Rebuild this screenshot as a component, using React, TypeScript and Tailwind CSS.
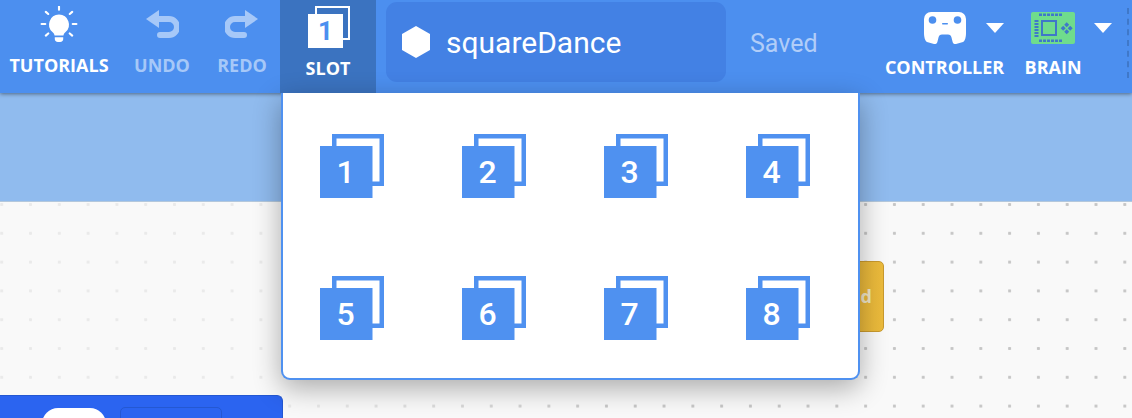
const sans = "font-['Open_Sans','Noto_Sans',sans-serif]";
const roboto = "font-['Roboto',sans-serif]";

function Bulb() {
  return (
    <svg width="38" height="37" viewBox="0 1 36 35" fill="white">
      <path d="M18 9a9.500 9.500 0 0 0-6 16.800c1.100 1 1.600 2 1.800 3.200h8.400c.2-1.200.7-2.200 1.800-3.200A9.500 9.500 0 0 0 18 9z" />
      <path d="M14 30.500h8v1.500a3 3 0 0 1-3 3h-2a3 3 0 0 1-3-3z" />
      <g stroke="white" strokeWidth="2" strokeLinecap="round">
        <path d="M18 1.500v3M5.500 6.500l2.300 2M30.500 6.500l-2.300 2M1.500 18h3.500M31 18h3.500M5.500 29l2.300-2M30.500 29l-2.300-2" />
      </g>
    </svg>
  );
}

function Undo({ flip }: { flip?: boolean }) {
  return (
    <svg width="34" height="30" viewBox="0 0 34 30" className={flip ? "-scale-x-100" : ""}>
      <path d="M1 10 L14 1 V19 Z" fill="#a6c8f8" />
      <path d="M12 10 H24 a8 8 0 0 1 0 16 H15" fill="none" stroke="#a6c8f8" strokeWidth="6" strokeLinecap="round" />
    </svg>
  );
}

function Controller() {
  return (
    <svg width="42" height="32" viewBox="0 0 42 32">
      <path
        d="M7 0H35a7 7 0 0 1 7 7V21c0 4-1 8-3 9l-7 2c-2 .3-3-.5-3.500-2.500l-1-4c-.5-2-1.500-3-3.500-3h-6c-2 0-3 1-3.500 3l-1 4C13 31.500 12 32.300 10 32l-7-2c-2-1-3-5-3-9V7a7 7 0 0 1 7-7z"
        fill="white"
      />
      <circle cx="8.500" cy="8" r="3.800" fill="#4c8fef" />
      <circle cx="33.500" cy="8" r="3.800" fill="#4c8fef" />
      <rect x="18" y="11" width="6" height="1.500" rx="0.700" fill="#4c8fef" />
    </svg>
  );
}

function Brain() {
  const top = [8, 12, 16, 20, 24, 28];
  const side = [8, 11, 14, 17, 20, 23];
  return (
    <svg width="44" height="32" viewBox="0 0 44 32">
      <rect width="44" height="32" rx="2" fill="#6fdc8c" />
      <g fill="#3f78c9">
        {top.map((x) => (
          <g key={x}>
            <rect x={x} y="1.500" width="3" height="2.500" />
            <rect x={x} y="27.500" width="3" height="2.500" />
          </g>
        ))}
        {side.map((y) => (
          <rect key={y} x="3.500" y={y} width="4" height="2" />
        ))}
        <path d="M10 8H26V24H10ZM12 10V22H24V10Z" fillRule="evenodd" />
        <rect x="34" y="11" width="3.500" height="3.500" transform="rotate(45 35.700 12.700)" />
        <rect x="34" y="18" width="3.500" height="3.500" transform="rotate(45 35.700 19.700)" />
        <rect x="30.500" y="14.500" width="3.500" height="3.500" transform="rotate(45 32.200 16.200)" />
        <rect x="37.500" y="14.500" width="3.500" height="3.500" transform="rotate(45 39.200 16.200)" />
      </g>
    </svg>
  );
}

function Caret() {
  return (
    <svg width="18" height="10" viewBox="0 0 18 10" fill="white">
      <path d="M0 0H18L9 10Z" />
    </svg>
  );
}

function SlotIcon({ n }: { n: number }) {
  return (
    <div className="relative w-16 h-16">
      <svg width="64" height="64" viewBox="0 0 64 64" className="absolute inset-0">
        <path d="M12 0H64V52H52V12H12Z" fill="#4f91f0" />
        <path d="M16.500 4.500H59.500V47.500H52V12H16.500Z" fill="white" />
        <rect x="0" y="12" width="52.500" height="52" fill="#4f91f0" />
      </svg>
      <span className={`absolute left-0 top-3 w-[51px] h-[52px] flex items-center justify-center text-[32px] font-medium text-white ${roboto}`}>
        {n}
      </span>
    </div>
  );
}

function HeaderLabel({ children, dim }: { children: string; dim?: boolean }) {
  return (
    <span className={`block text-[18px] leading-[22px] font-bold whitespace-nowrap ${sans} ${dim ? "text-[#a6c8f8]" : "text-white"}`}>
      {children}
    </span>
  );
}

export default function App() {
  return (
    <div className="relative w-[1132px] h-[418px] overflow-hidden flex flex-col bg-[#f9f9f9]">
      <header className="h-[93px] shrink-0 flex bg-[#4c8fef] shadow-[0_1px_4px_rgba(0,0,0,0.45)] z-10">
        <div className="w-[118px] flex flex-col items-center pt-[6px]">
          <Bulb />
          <div className="mt-[11px]">
            <HeaderLabel>TUTORIALS</HeaderLabel>
          </div>
        </div>
        <div className="w-[81px] pl-[7px] flex flex-col items-center pt-[9px]">
          <Undo />
          <div className="mt-[15px]">
            <HeaderLabel dim>UNDO</HeaderLabel>
          </div>
        </div>
        <div className="w-[81px] pl-[5px] flex flex-col items-center pt-[9px]">
          <Undo flip />
          <div className="mt-[15px]">
            <HeaderLabel dim>REDO</HeaderLabel>
          </div>
        </div>
        <div className="w-[96px] bg-[#3b73c0] flex flex-col items-center pt-[6px]">
          <div className="relative w-[42px] h-[42px] ml-[2px]">
            <div className="absolute right-0 top-0 w-[35px] h-[34px] border-[2.500px] border-white" />
            <div className={`absolute left-0 bottom-0 w-[35px] h-[34px] bg-white flex items-center justify-center text-[26px] font-bold text-[#4c8fef] ${roboto}`}>
              1
            </div>
          </div>
          <div className="mt-[9px]">
            <HeaderLabel>SLOT</HeaderLabel>
          </div>
        </div>
        <div className="ml-[10px] mt-[2px] w-[340px] h-[80px] rounded-[11px] bg-[#4381e4] flex items-center pl-4">
          <svg width="28" height="32" viewBox="0 0 28 32" fill="white">
            <path d="M14 0L28 8V24L14 32L0 24V8Z" />
          </svg>
          <span className={`ml-[16px] text-[30px] text-white ${roboto}`}>squareDance</span>
        </div>
        <span className={`ml-[24px] mt-[28px] h-[32px] text-[25px] leading-[32px] text-[#b1cdf8] ${roboto}`}>Saved</span>
        <div className="ml-[68px] w-[118px] flex flex-col items-center pt-[12px] relative">
          <Controller />
          <div className="mt-[12px]">
            <HeaderLabel>CONTROLLER</HeaderLabel>
          </div>
          <div className="absolute left-[100px] top-[23px]">
            <Caret />
          </div>
        </div>
        <div className="ml-[21px] w-[57px] flex flex-col items-center pt-[12px] relative">
          <Brain />
          <div className="mt-[12px]">
            <HeaderLabel>BRAIN</HeaderLabel>
          </div>
          <div className="absolute left-[69px] top-[23px]">
            <Caret />
          </div>
        </div>
        <div className="ml-[45px] mt-[8px] h-[70px] w-0 border-r-2 border-dashed border-[#3f78c9]" />
      </header>

      <div className="h-[109px] shrink-0 bg-[#90bbee] border-b border-[#b4c8dc]" />

      <main className="relative flex-1 flex flex-col justify-end bg-[#f9f9f9] bg-[linear-gradient(to_right,rgba(249,249,249,0.7)_0,rgba(249,249,249,0.7)_300px,transparent_620px),radial-gradient(circle,#c6c6c6_1.300px,transparent_1.900px)] bg-[size:100%_100%,28.800px_28.800px] bg-[position:0_0,-12.700px_-11.900px]">
        <div className="absolute left-[700px] top-[59px] w-[184px] h-[71px] rounded-[5px] border border-[#c99a2e] bg-gradient-to-r from-[#dca72f] to-[#ecbb3c] flex items-center justify-end pr-[11px]">
          <span className={`text-[18px] font-bold text-[#f0e6c8] ${sans}`}>d</span>
        </div>
        <div className="w-[283px] h-[23px] rounded-tr-[6px] bg-[#2b64f0] border-t border-r border-[#2458d2] relative">
          <div className="absolute left-[42px] top-[12px] w-[64px] h-[32px] rounded-full bg-white" />
          <div className="absolute left-[120px] top-[11px] w-[102px] h-[30px] rounded-[5px] border border-[#2458d2]" />
        </div>
      </main>

      <div className="absolute left-[281px] top-[93px] z-20 w-[579px] h-[287px] bg-white border-2 border-t-0 border-[#4f91f0] rounded-b-[9px] shadow-[0_8px_28px_rgba(0,0,0,0.32)] pl-[37px] pt-[41px]">
        <div className="grid grid-cols-[repeat(4,64px)] gap-x-[78px] gap-y-[78px]">
          {[1, 2, 3, 4, 5, 6, 7, 8].map((n) => (
            <SlotIcon key={n} n={n} />
          ))}
        </div>
      </div>
    </div>
  );
}
